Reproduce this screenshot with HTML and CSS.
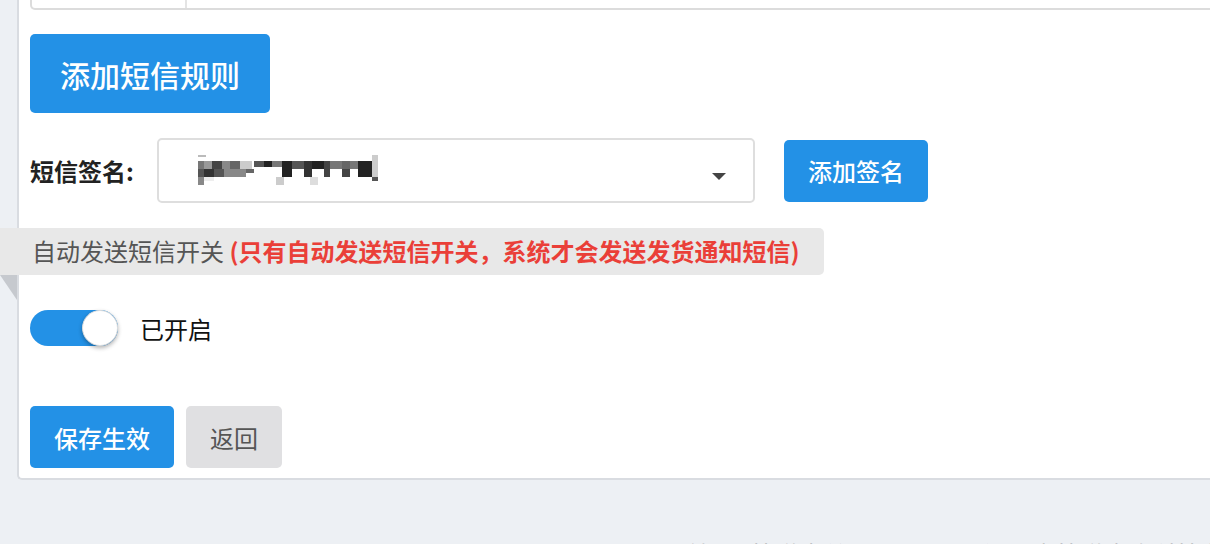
FILE: index.html
```html
<!DOCTYPE html>
<html lang="zh-CN">
<head>
  <meta charset="UTF-8" />
  <title>短信设置</title>
  <meta name="viewport" content="width=device-width, initial-scale=1.0" />
  <link rel="stylesheet" href="styles.css">
</head>
<body>
  <div class="content">
    <div class="box">
      <div class="table-stub">
        <div class="stub-cell first"></div>
        <div class="stub-cell"></div>
      </div>

      <button class="btn btn-primary btn-lg">添加短信规则</button>

      <div class="form-row">
        <label class="form-label">短信签名:</label>
        <div class="select">
          <svg class="blur-name" width="190" height="32" viewBox="0 0 190 32">
            <rect x="0" y="0" width="8" height="2" fill="#bbb" />
            <rect x="0" y="6" width="6" height="8" fill="#777" />
            <rect x="6" y="6" width="8" height="8" fill="#999" />
            <rect x="14" y="6" width="10" height="8" fill="#444" />
            <rect x="24" y="6" width="8" height="8" fill="#888" />
            <rect x="32" y="6" width="10" height="8" fill="#666" />
            <rect x="42" y="6" width="12" height="8" fill="#ccc" />
            <rect x="0" y="14" width="6" height="8" fill="#555" />
            <rect x="6" y="14" width="10" height="8" fill="#333" />
            <rect x="16" y="14" width="10" height="8" fill="#555" />
            <rect x="26" y="14" width="22" height="8" fill="#888" />
            <rect x="48" y="14" width="8" height="4" fill="#666" />
            <rect x="56" y="6" width="10" height="6" fill="#555" />
            <rect x="66" y="6" width="8" height="6" fill="#222" />
            <rect x="74" y="6" width="10" height="6" fill="#777" />
            <rect x="84" y="6" width="10" height="16" fill="#222" />
            <rect x="94" y="6" width="12" height="8" fill="#555" />
            <rect x="106" y="6" width="8" height="16" fill="#333" />
            <rect x="114" y="6" width="12" height="8" fill="#222" />
            <rect x="126" y="6" width="6" height="16" fill="#444" />
            <rect x="132" y="6" width="12" height="8" fill="#777" />
            <rect x="144" y="6" width="8" height="8" fill="#666" />
            <rect x="144" y="14" width="8" height="8" fill="#444" />
            <rect x="152" y="6" width="8" height="8" fill="#777" />
            <rect x="160" y="6" width="14" height="16" fill="#222" />
            <rect x="174" y="0" width="6" height="22" fill="#ccc" />
            <rect x="0" y="22" width="6" height="8" fill="#888" />
            <rect x="6" y="22" width="10" height="4" fill="#eee" />
            <rect x="78" y="22" width="8" height="8" fill="#ccc" />
            <rect x="112" y="22" width="8" height="8" fill="#ddd" />
            <rect x="174" y="22" width="6" height="4" fill="#555" />
          </svg>
          <span class="caret"></span>
        </div>
        <button class="btn btn-primary btn-md">添加签名</button>
      </div>

      <div class="ribbon">自动发送短信开关 <strong class="warn">(只有自动发送短信开关，系统才会发送发货通知短信)</strong></div>

      <div class="switch-row">
        <span class="switch on"><span class="knob"></span></span>
        <span class="switch-text">已开启</span>
      </div>

      <div class="actions">
        <button class="btn btn-primary btn-md">保存生效</button>
        <button class="btn btn-default btn-md">返回</button>
      </div>
    </div>

    <footer>首页 | 快递查单 | 　　　　　深圳市快递查询科技有限公司</footer>
  </div>
</body>
</html>
```

FILE: styles.css
```css
* {
  box-sizing: border-box;
  margin: 0;
  padding: 0;
}

body {
  font-family: "Noto Sans CJK SC", "Noto Sans", sans-serif;
  background: #edf0f4;
  color: #222;
  overflow: hidden;
}

.content {
  padding-left: 17px;
}

.box {
  background: #fff;
  border: 2px solid #d9dce1;
  border-top: none;
  border-right: none;
  border-radius: 0 0 0 5px;
  margin-right: -20px;
  padding: 0 0 10px 11px;
}

.table-stub {
  display: flex;
  height: 10px;
  border: 2px solid #dcdcdc;
  border-top: none;
  border-radius: 0 0 0 5px;
}

.stub-cell {
  flex: 1;
}

.stub-cell.first {
  flex: 0 0 155px;
  border-right: 2px solid #e4e4e4;
}

.btn {
  font-family: inherit;
  border: none;
  border-radius: 5px;
  cursor: pointer;
  display: inline-flex;
  align-items: center;
  justify-content: center;
}

.btn-primary {
  background: #2391e6;
  color: #fff;
  font-weight: 500;
}

.btn-default {
  background: #e0e0e2;
  color: #555;
}

.btn-lg {
  margin-top: 24px;
  width: 240px;
  height: 79px;
  font-size: 30px;
}

.btn-md {
  height: 62px;
  padding: 0 24px;
  font-size: 24px;
}

.form-row {
  display: flex;
  align-items: center;
  margin-top: 25px;
}

.form-label {
  font-size: 24px;
  font-weight: bold;
  color: #222;
  width: 127px;
}

.select {
  position: relative;
  width: 598px;
  height: 65px;
  border: 2px solid #dedede;
  border-radius: 5px;
  display: flex;
  align-items: center;
  padding-left: 39px;
}

.caret {
  position: absolute;
  right: 27px;
  top: 33px;
  border-left: 7px solid transparent;
  border-right: 7px solid transparent;
  border-top: 7px solid #444;
}

.form-row .btn-md {
  margin-left: 29px;
}

.ribbon {
  position: relative;
  margin: 25px 0 0 -30px;
  width: 824px;
  height: 47px;
  line-height: 45px;
  background: #e8e8e8;
  border-radius: 0 5px 5px 0;
  padding-left: 32px;
  font-size: 24px;
  color: #555;
  white-space: nowrap;
}

.ribbon::after {
  content: "";
  position: absolute;
  left: 0;
  top: 47px;
  border-top: 25px solid #c6c9ce;
  border-left: 17px solid transparent;
}

.warn {
  color: #ea3f38;
  font-weight: bold;
}

.switch-row {
  display: flex;
  align-items: center;
  margin-top: 35px;
  height: 36px;
}

.switch {
  position: relative;
  width: 88px;
  height: 36px;
  border-radius: 18px;
  background: #2391e6;
}

.knob {
  position: absolute;
  right: 0;
  top: 0;
  width: 36px;
  height: 36px;
  border-radius: 50%;
  background: #fff;
  border: 1px solid #ddd;
  box-shadow: 0 2px 4px rgba(0, 0, 0, 0.3);
}

.switch-text {
  margin-left: 22px;
  font-size: 24px;
  color: #111;
}

.actions {
  display: flex;
  gap: 12px;
  margin-top: 60px;
}

footer {
  padding: 56px 0 0 669px;
  font-size: 24px;
  color: #999;
  white-space: nowrap;
}
```
